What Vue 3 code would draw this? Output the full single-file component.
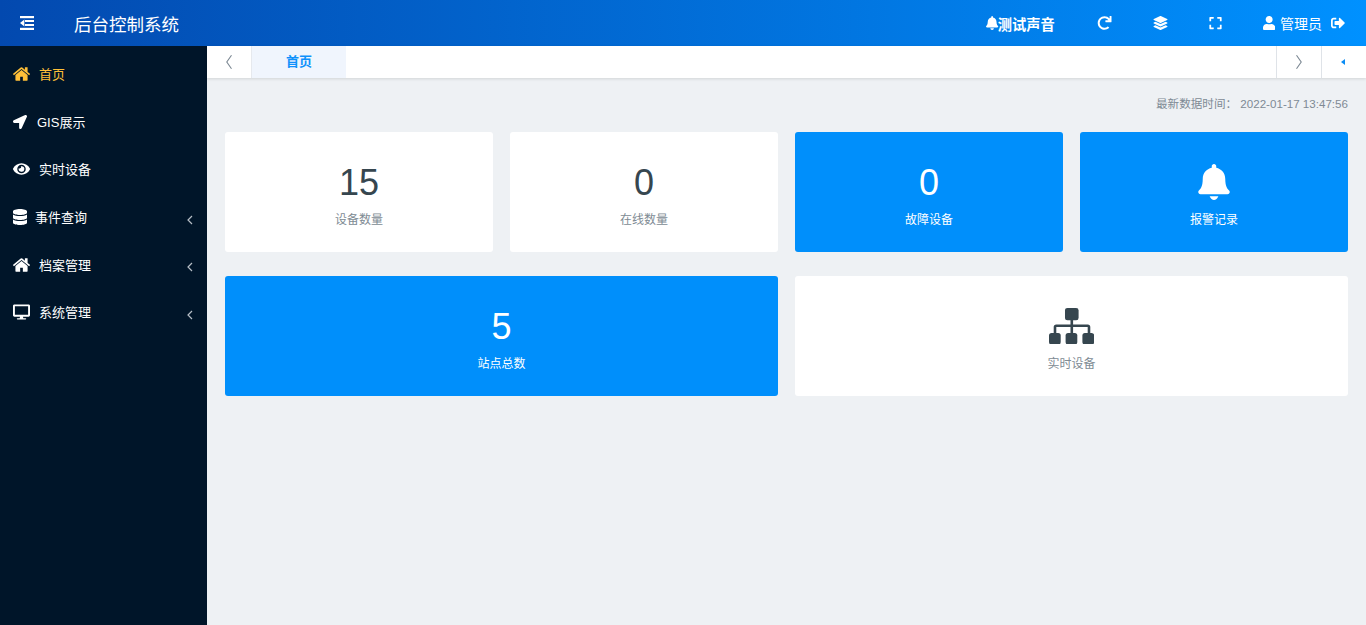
<script setup>
const icons = {
  home: { box: '90 250 1610 1290', d: 'M1472 992v480q0 26-19 45t-45 19h-384v-384h-256v384h-384q-26 0-45-19t-19-45v-480q0-1 .5-3t.5-3l575-474 575 474q1 2 1 6zm223-69l-62 74q-8 9-21 11h-3q-13 0-21-7l-692-577-692 577q-12 8-24 7-13-2-21-11l-62-74q-8-10-7-23.5t11-21.5l719-599q32-26 76-26t76 26l244 204v-195q0-14 9-23t23-9h192q14 0 23 9t9 23v408l219 182q10 8 11 21.5t-7 23.5z' },
  arrow: { box: '0 0 512 512', d: 'M444.52 3.52L28.74 195.42c-47.97 22.39-31.98 92.75 19.19 92.75h175.91v175.91c0 51.17 70.36 67.17 92.75 19.19l191.9-415.78c15.99-38.39-25.59-79.97-63.97-63.97z' },
  eye: { box: '0 0 576 512', d: 'M572.52 241.4C518.29 135.59 410.93 64 288 64S57.68 135.64 3.48 241.41a32.35 32.35 0 0 0 0 29.19C57.71 376.41 165.07 448 288 448s230.32-71.64 284.52-177.41a32.35 32.35 0 0 0 0-29.19zM288 400a144 144 0 1 1 144-144 143.93 143.93 0 0 1-144 144zm0-240a95.31 95.31 0 0 0-25.31 3.79 47.85 47.85 0 0 1-66.9 66.9A95.78 95.78 0 1 0 288 160z' },
  database: { box: '0 0 448 512', d: 'M448 73.143v45.714C448 159.143 347.667 192 224 192S0 159.143 0 118.857V73.143C0 32.857 100.333 0 224 0s224 32.857 224 73.143zM448 176v102.857C448 319.143 347.667 352 224 352S0 319.143 0 278.857V176c48.125 33.143 136.208 48.572 224 48.572S399.874 209.143 448 176zm0 160v102.857C448 479.143 347.667 512 224 512S0 479.143 0 438.857V336c48.125 33.143 136.208 48.572 224 48.572S399.874 369.143 448 336z' },
  desktop: { box: '0 0 576 512', d: 'M528 0H48C21.5 0 0 21.5 0 48v320c0 26.5 21.5 48 48 48h192l-16 48h-72c-13.3 0-24 10.7-24 24s10.7 24 24 24h272c13.3 0 24-10.7 24-24s-10.7-24-24-24h-72l-16-48h192c26.5 0 48-21.5 48-48V48c0-26.5-21.5-48-48-48zm-16 352H64V64h448v288z' },
  bell: { box: '0 0 448 512', d: 'M224 512c35.32 0 63.97-28.65 63.97-64H160.03c0 35.35 28.65 64 63.97 64zm215.39-149.71c-19.32-20.76-55.47-51.99-55.47-154.29 0-77.7-54.48-139.9-127.94-155.16V32c0-17.67-14.32-32-31.98-32s-31.98 14.33-31.98 32v20.84C118.56 68.1 64.08 130.3 64.08 208c0 102.3-36.15 133.53-55.47 154.29-6 6.45-8.66 14.16-8.61 21.71.11 16.4 12.98 32 32.1 32h383.8c19.12 0 32-15.6 32.1-32 .05-7.55-2.61-15.27-8.61-21.71z' },
  redo: { box: '0 0 512 512', d: 'M500.33 0h-47.41a12 12 0 0 0-12 12.57l4 82.76A247.42 247.42 0 0 0 256 8C119.34 8 7.9 119.53 8 256.19 8.1 393.07 119.1 504 256 504a247.1 247.1 0 0 0 166.18-63.91 12 12 0 0 0 .48-17.43l-34-34a12 12 0 0 0-16.38-.55A176 176 0 1 1 402.1 157.8l-101.53-4.87a12 12 0 0 0-12.57 12v47.41a12 12 0 0 0 12 12h200.33a12 12 0 0 0 12-12V12a12 12 0 0 0-12-12z' },
  layers: { box: '0 0 512 512', d: 'M12.41 148.02l232.94 105.67c6.8 3.09 14.49 3.09 21.29 0l232.94-105.67c16.55-7.51 16.55-32.52 0-40.03L266.65 2.31a25.607 25.607 0 0 0-21.29 0L12.41 107.98c-16.55 7.51-16.55 32.53 0 40.04zm487.18 88.28l-58.09-26.33-161.64 73.27c-7.56 3.43-15.59 5.17-23.86 5.17s-16.29-1.74-23.86-5.17L70.51 209.97l-58.1 26.33c-16.55 7.5-16.55 32.5 0 40l232.94 105.59c6.8 3.08 14.49 3.08 21.29 0L499.59 276.3c16.55-7.5 16.55-32.5 0-40zm0 127.8l-57.87-26.23-161.86 73.37c-7.56 3.43-15.59 5.17-23.86 5.17s-16.29-1.74-23.86-5.17L70.29 337.87 12.41 364.1c-16.55 7.5-16.55 32.5 0 40l232.94 105.59c6.8 3.08 14.49 3.08 21.29 0L499.59 404.1c16.55-7.5 16.55-32.5 0-40z' },
  expand: { box: '0 0 448 512', d: 'M0 180V56c0-13.3 10.7-24 24-24h124c6.6 0 12 5.4 12 12v40c0 6.6-5.4 12-12 12H64v84c0 6.6-5.4 12-12 12H12c-6.6 0-12-5.4-12-12zM288 44v40c0 6.6 5.4 12 12 12h84v84c0 6.6 5.4 12 12 12h40c6.6 0 12-5.4 12-12V56c0-13.3-10.7-24-24-24H300c-6.6 0-12 5.4-12 12zm148 276h-40c-6.6 0-12 5.4-12 12v84h-84c-6.6 0-12 5.4-12 12v40c0 6.6 5.4 12 12 12h124c13.3 0 24-10.7 24-24V332c0-6.6-5.4-12-12-12zM160 468v-40c0-6.6-5.4-12-12-12H64v-84c0-6.6-5.4-12-12-12H12c-6.6 0-12 5.4-12 12v124c0 13.3 10.7 24 24 24h124c6.6 0 12-5.4 12-12z' },
  user: { box: '0 0 448 512', d: 'M224 256c70.7 0 128-57.3 128-128S294.7 0 224 0 96 57.3 96 128s57.3 128 128 128zm89.6 32h-16.7c-22.2 10.2-46.9 16-72.9 16s-50.6-5.8-72.9-16h-16.7C60.2 288 0 348.2 0 422.4V464c0 26.5 21.5 48 48 48h352c26.5 0 48-21.5 48-48v-41.6c0-74.2-60.2-134.4-134.4-134.4z' },
  signout: { box: '0 0 512 512', d: 'M497 273L329 441c-15 15-41 4.5-41-17v-96H152c-13.3 0-24-10.7-24-24v-96c0-13.3 10.7-24 24-24h136V88c0-21.4 25.9-32 41-17l168 168c9.3 9.4 9.3 24.6 0 34zM192 436v-40c0-6.6-5.4-12-12-12H96c-17.7 0-32-14.3-32-32V160c0-17.7 14.3-32 32-32h84c6.6 0 12-5.4 12-12V76c0-6.6-5.4-12-12-12H96c-53 0-96 43-96 96v192c0 53 43 96 96 96h84c6.6 0 12-5.4 12-12z' }
}

// 左侧菜单
const menus = [
  { name: '首页', icon: 'home', active: true, kind: 'wide' },
  { name: 'GIS展示', icon: 'arrow', kind: 'small' },
  { name: '实时设备', icon: 'eye', kind: 'wide' },
  { name: '事件查询', icon: 'database', kind: 'db', sub: true },
  { name: '档案管理', icon: 'home', kind: 'wide', sub: true },
  { name: '系统管理', icon: 'desktop', kind: 'wide', sub: true }
]

// 统计卡片
const cards = [
  { value: '15', label: '设备数量' },
  { value: '0', label: '在线数量' },
  { value: '0', label: '故障设备', blue: true },
  { icon: 'bell', label: '报警记录', blue: true },
  { value: '5', label: '站点总数', blue: true, span: true },
  { sitemap: true, label: '实时设备', span: true }
]
</script>

<template>
  <div class="page">
    <header class="topbar">
      <svg class="toggle" viewBox="0 0 14 14" fill="currentColor">
        <rect x="0" y="0" width="14" height="2.2" />
        <rect x="5" y="4" width="9" height="2" />
        <rect x="5" y="8" width="9" height="2" />
        <rect x="0" y="11.8" width="14" height="2.2" />
        <polygon points="0,7 4.4,3.6 4.4,10.4" />
      </svg>
      <div class="title">后台控制系统</div>
      <div class="tools">
        <div class="tool sound">
          <svg class="ico" :viewBox="icons.bell.box" fill="currentColor"><path :d="icons.bell.d" /></svg>
          <b>测试声音</b>
        </div>
        <svg class="ico tool-ico redo" :viewBox="icons.redo.box" fill="currentColor"><path :d="icons.redo.d" /></svg>
        <svg class="ico tool-ico" :viewBox="icons.layers.box" fill="currentColor"><path :d="icons.layers.d" /></svg>
        <svg class="ico tool-ico full" :viewBox="icons.expand.box" fill="currentColor"><path :d="icons.expand.d" /></svg>
        <div class="tool admin">
          <svg class="ico" :viewBox="icons.user.box" fill="currentColor"><path :d="icons.user.d" /></svg>
          <span>管理员</span>
          <svg class="ico out" :viewBox="icons.signout.box" fill="currentColor"><path :d="icons.signout.d" /></svg>
        </div>
      </div>
    </header>

    <div class="body">
      <aside class="sidebar">
        <div
          v-for="m in menus"
          :key="m.name"
          class="menu-item"
          :class="{ active: m.active }"
        >
          <svg class="menu-ico" :class="m.kind" :viewBox="icons[m.icon].box" fill="currentColor"><path :d="icons[m.icon].d" /></svg>
          <span class="menu-name">{{ m.name }}</span>
          <svg v-if="m.sub" class="caret" viewBox="0 0 6 10" fill="none" stroke="currentColor" stroke-width="1.2"><path d="M5 1 1 5l4 4" /></svg>
        </div>
      </aside>

      <main class="main">
        <div class="tabs">
          <div class="tab-btn left">
            <svg class="angle" viewBox="0 0 6 14" fill="none" stroke="currentColor" stroke-width="1.1"><path d="M5.5 .3 .8 7l4.7 6.7" /></svg>
          </div>
          <div class="tab-on">首页</div>
          <div class="tab-fill"></div>
          <div class="tab-btn">
            <svg class="angle" viewBox="0 0 6 14" fill="none" stroke="currentColor" stroke-width="1.1"><path d="M.5 .3 5.2 7 .5 13.7" /></svg>
          </div>
          <div class="tab-btn">
            <span class="tri"></span>
          </div>
        </div>

        <div class="content">
          <div class="stamp">最新数据时间：&nbsp;2022-01-17 13:47:56</div>
          <div class="grid">
            <div
              v-for="c in cards"
              :key="c.label + c.value"
              class="card"
              :class="{ blue: c.blue, span: c.span }"
            >
              <div class="figure">
                <template v-if="c.value">{{ c.value }}</template>
                <svg v-else-if="c.icon" class="big-bell" viewBox="0 0 448 512" fill="currentColor">
                  <path d="M224 512c24 0 50-24 62-54H162c12 30 38 54 62 54z" />
                  <path d="M439.39 377.29c-19.32-20.76-55.47-51.99-55.47-169.29 0-77.7-54.48-139.9-127.94-155.16V32c0-17.67-14.32-32-31.98-32s-31.98 14.33-31.98 32v20.84C118.56 68.1 64.08 130.3 64.08 208c0 117.3-36.15 148.53-55.47 169.29-6 6.45-8.66 14.16-8.61 21.71.11 16.4 12.98 32 32.1 32h383.8c19.12 0 32-15.6 32.1-32 .05-7.55-2.61-15.27-8.61-21.71z" />
                </svg>
                <svg v-else class="sitemap" viewBox="0 0 45.3 36.6" fill="#36464f">
                  <rect x="16" y="0" width="13.6" height="12.3" rx="2.5" />
                  <rect x="0" y="25" width="11.7" height="11.6" rx="2.5" />
                  <rect x="16.6" y="25" width="11.7" height="11.6" rx="2.5" />
                  <rect x="33.4" y="25" width="11.7" height="11.6" rx="2.5" />
                  <path d="M21.5 12h2.6v4.4h14.6a2.6 2.6 0 0 1 2.6 2.6v6h-2.6v-6H24.1v6h-2.6v-6H7.3v6H4.7v-6a2.6 2.6 0 0 1 2.6-2.6h14.2z" />
                </svg>
              </div>
              <div class="label">{{ c.label }}</div>
            </div>
          </div>
        </div>
      </main>
    </div>
  </div>
</template>

<style>
html,
body {
  margin: 0;
  height: 100%;
  overflow: hidden;
}
</style>

<style scoped>
.page {
  display: flex;
  flex-direction: column;
  height: 100vh;
  font-family: "Liberation Sans", "Noto Sans CJK SC", sans-serif;
  font-size: 13px;
  background: #eef1f4;
}

/* 顶部 */
.topbar {
  flex: 0 0 46px;
  display: flex;
  align-items: center;
  color: #fff;
  background: linear-gradient(90deg, #0349af, #0091ff);
}
.toggle {
  width: 14px;
  height: 14px;
  margin-left: 20px;
}
.title {
  margin-left: 40px;
  font-size: 17.5px;
}
.tools {
  margin-left: auto;
  padding-right: 21px;
  display: flex;
  align-items: center;
}
.ico {
  height: 14px;
  display: block;
}
.tool {
  display: flex;
  align-items: center;
}
.sound .ico {
  margin-right: -1px;
}
.sound b {
  font-size: 14.25px;
  font-weight: 700;
}
.tool-ico {
  width: 15px;
  margin-left: 41px;
}
.redo {
  margin-left: 42px;
}
.full {
  margin-left: 40px;
}
.admin {
  margin-left: 40px;
  font-size: 14px;
}
.admin span {
  margin-left: 5px;
}
.out {
  margin-left: 9px;
}

.body {
  flex: 1;
  display: flex;
  min-height: 0;
}

/* 侧边栏 */
.sidebar {
  flex: 0 0 207px;
  padding-top: 5px;
  box-sizing: border-box;
  background: #001529;
  color: #fff;
}
.menu-item {
  height: 47.6px;
  display: flex;
  align-items: center;
  padding-left: 13px;
  padding-right: 14px;
}
.menu-item.active {
  color: #ffc038;
}
.menu-ico {
  height: 16px;
  display: block;
  flex: none;
  margin-top: -1px;
}
.menu-ico.wide {
  width: 17px;
  margin-right: 9px;
}
.menu-ico.small {
  width: 14px;
  margin-right: 10px;
}
.menu-ico.db {
  width: 14px;
  margin-right: 8px;
}
.menu-name {
  line-height: 1;
}
.caret {
  width: 6px;
  height: 10px;
  margin-left: auto;
  margin-top: 4px;
  color: #b6bec6;
}

/* 标签栏 */
.main {
  flex: 1;
  min-width: 0;
  display: flex;
  flex-direction: column;
}
.tabs {
  flex: 0 0 32px;
  display: flex;
  background: #fff;
  box-shadow: 0 1px 3px rgba(0, 0, 0, 0.12);
}
.tab-btn {
  width: 45px;
  box-sizing: border-box;
  border-left: 1px solid #dfe3e8;
  display: flex;
  align-items: center;
  justify-content: center;
  color: #7b8792;
}
.tab-btn.left {
  border-left: 0;
  border-right: 1px solid #e6e9ee;
}
.tab-btn.left .angle {
  margin-right: 1px;
}
.angle {
  width: 6px;
  height: 14px;
}
.tri {
  width: 0;
  height: 0;
  margin-right: 3px;
  border-style: solid;
  border-width: 3.5px 4px 3.5px 0;
  border-color: transparent #0a8cf5 transparent transparent;
}
.tab-on {
  width: 94px;
  box-sizing: border-box;
  padding-top: 5px;
  text-align: center;
  font-weight: 700;
  color: #0f91fb;
  background: #f0f5fd;
}
.tab-fill {
  flex: 1;
}

/* 内容 */
.content {
  padding: 18px 18px 0;
}
.stamp {
  height: 36px;
  text-align: right;
  font-size: 11.6px;
  line-height: 16px;
  color: #7e8a94;
}
.grid {
  display: grid;
  grid-template-columns: repeat(4, 1fr);
  column-gap: 17px;
  row-gap: 24px;
}
.card {
  height: 120px;
  box-sizing: border-box;
  padding-top: 30px;
  background: #fff;
  border-radius: 3px;
  text-align: center;
  color: #36464f;
}
.card.span {
  grid-column: span 2;
}
.card.blue {
  background: #008ffb;
  color: #fff;
}
.figure {
  height: 42px;
  font-size: 36px;
  line-height: 42px;
  display: flex;
  align-items: center;
  justify-content: center;
}
.big-bell {
  width: 32px;
  height: 36px;
  margin-top: -2px;
}
.sitemap {
  width: 45.3px;
  height: 36.6px;
  margin-top: -2px;
}
.label {
  margin-top: 7px;
  font-size: 12px;
  line-height: 18px;
  color: #808b94;
}
.card.blue .label {
  color: #fff;
}
</style>
